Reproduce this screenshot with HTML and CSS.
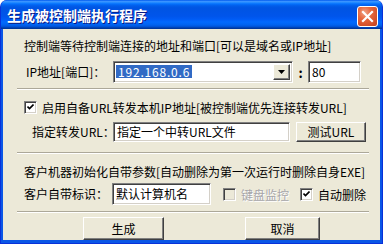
FILE: index.html
```html
<!DOCTYPE html>
<html>
<head>
<meta charset="utf-8">
<link rel="stylesheet" href="styles.css">
</head>
<body>
<div class="window">
  <div class="titlebar">
    <span class="title">生成被控制端执行程序</span>
    <span class="close"><svg width="21" height="21" viewBox="0 0 21 21"><path d="M6 6 L15 15 M15 6 L6 15" stroke="#fff" stroke-width="2.2" stroke-linecap="square"/></svg></span>
  </div>
  <div class="client">
    <div class="desc d1">控制端等待控制端连接的地址和端口[可以是域名或IP地址]</div>
    <div class="row row-ip">
      <span class="lbl lbl-ip">IP地址[端口]：</span>
      <div class="field combo"><span class="sel">192.168.0.6</span><span class="drop"><svg width="7" height="4" viewBox="0 0 7 4"><path d="M0 0 H7 L3.5 4 Z" fill="#000"/></svg></span></div>
      <span class="colon">:</span>
      <div class="field port">80</div>
    </div>
    <div class="sep s1"></div>
    <div class="row row-chk">
      <span class="chk"><svg width="7" height="7" viewBox="0 0 7 7"><path d="M0.5 2.5 L2.5 4.5 L6.5 0.5" stroke="#000" stroke-width="1.6" fill="none"/></svg></span>
      <span class="chk-lbl">启用自备URL转发本机IP地址[被控制端优先连接转发URL]</span>
    </div>
    <div class="row row-url">
      <span class="lbl lbl-url">指定转发URL：</span>
      <div class="field url">指定一个中转URL文件</div>
      <span class="btn btn-test">测试URL</span>
    </div>
    <div class="sep s2"></div>
    <div class="desc d2">客户机器初始化自带参数[自动删除为第一次运行时删除自身EXE]</div>
    <div class="row row-id">
      <span class="lbl lbl-id">客户自带标识：</span>
      <div class="field ident">默认计算机名</div>
      <span class="chk disabled"></span>
      <span class="chk-lbl dis-lbl">键盘监控</span>
      <span class="chk chk2"><svg width="7" height="7" viewBox="0 0 7 7"><path d="M0.5 2.5 L2.5 4.5 L6.5 0.5" stroke="#000" stroke-width="1.6" fill="none"/></svg></span>
      <span class="chk-lbl">自动删除</span>
    </div>
    <div class="sep s3"></div>
    <div class="row row-btns">
      <span class="btn btn-gen">生成</span>
      <span class="btn btn-cancel">取消</span>
    </div>
  </div>
</div>
</body>
</html>
```

FILE: styles.css
```css
html, body {
  margin: 0;
  padding: 0;
  background: #ffffff;
}
body {
  font-family: "Noto Sans CJK SC", "Noto Sans", sans-serif;
  font-size: 12px;
  color: #000;
}
.window {
  width: 383px;
  height: 244px;
  box-sizing: border-box;
  background: #0A56E6;
  border-radius: 7px 7px 0 0;
  display: flex;
  flex-direction: column;
  overflow: hidden;
  border: 1px solid #0831D9;
  border-top: none;
}
.titlebar {
  height: 29px;
  flex: none;
  display: flex;
  align-items: flex-start;
  justify-content: space-between;
  background: linear-gradient(to bottom, #0058EE 0%, #3A93FF 5%, #288EFF 8%, #127DFF 11%, #036FFC 14%, #0262EE 18%, #0057E5 24%, #0054E3 30%, #0055EB 56%, #005BF5 66%, #026AFE 76%, #0062EF 86%, #0052D6 92%, #0040AB 96%, #003092 100%);
  margin: 0 -1px;
  border-radius: 7px 7px 0 0;
}
.title {
  color: #fff;
  font-weight: bold;
  font-size: 14px;
  line-height: 16px;
  margin: 7px 0 0 7px;
  text-shadow: 1px 1px #0A1883;
}
.close {
  width: 21px;
  height: 21px;
  box-sizing: border-box;
  margin: 6px 5px 0 0;
  border: 1px solid #fff;
  border-radius: 3px;
  background: radial-gradient(circle at 35% 30%, #F0A58A 0%, #E7693F 35%, #D5512B 70%, #C1401D 100%);
  display: flex;
}
.close svg { margin: -1px; }
.client {
  flex: 1;
  margin: 0 2px 3px 2px;
  background: #ECE9D8;
  display: flex;
  flex-direction: column;
}
.desc {
  line-height: 12px;
  height: 12px;
  white-space: nowrap;
  padding-left: 21px;
}
.d1 { margin-top: 11px; }
.d2 { margin-top: 12px; }
.row {
  display: flex;
  align-items: center;
  white-space: nowrap;
}
.lbl { line-height: 12px; }
.field {
  box-sizing: border-box;
  background: #fff;
  border-top: 1px solid #808080;
  border-left: 1px solid #808080;
  border-right: 1px solid #fff;
  border-bottom: 1px solid #fff;
  box-shadow: inset 1px 1px #404040, inset -1px -1px #D4D0C8;
  padding: 0 0 0 3px;
  line-height: 16px;
  display: flex;
  align-items: center;
}
.row-ip { margin-top: 9px; height: 22px; padding-left: 23px; }
.lbl-ip { width: 87px; }
.combo {
  width: 180px;
  height: 22px;
  padding: 2px 2px 2px 2px;
  justify-content: space-between;
  align-items: stretch;
}
.sel {
  background: #316AC5;
  color: #fff;
  line-height: 14px;
  margin: 1px 0 2px 0;
  padding: 0 2px;
  letter-spacing: 0.8px;
}
.drop {
  width: 17px;
  box-sizing: border-box;
  background: #ECE9D8;
  border-top: 1px solid #fff;
  border-left: 1px solid #fff;
  border-right: 1px solid #404040;
  border-bottom: 1px solid #404040;
  box-shadow: inset -1px -1px #808080;
  display: flex;
  align-items: center;
  justify-content: center;
}
.colon {
  width: 15px;
  text-align: center;
  font-weight: bold;
  font-size: 13px;
}
.port { width: 53px; height: 22px; }
.sep {
  height: 0;
  border-top: 1px solid #ACA899;
  border-bottom: 1px solid #fff;
  margin-left: 14px;
  margin-right: 11px;
}
.s1 { margin-top: 5px; }
.s2 { margin-top: 10px; }
.s3 { margin-top: 6px; }
.chk {
  width: 13px;
  height: 13px;
  box-sizing: border-box;
  background: #fff;
  border-top: 1px solid #808080;
  border-left: 1px solid #808080;
  border-right: 1px solid #fff;
  border-bottom: 1px solid #fff;
  box-shadow: inset 1px 1px #404040, inset -1px -1px #D4D0C8;
  display: flex;
  align-items: center;
  justify-content: center;
  flex: none;
}
.chk.disabled { background: #ECE9D8; }
.chk-lbl { line-height: 13px; margin-left: 5px; }
.dis-lbl { color: #A7A6AA; text-shadow: 1px 1px #fff; }
.row-chk { margin-top: 11px; height: 13px; padding-left: 21px; }
.row-url { margin-top: 8px; height: 20px; padding-left: 29px; }
.lbl-url { width: 81px; }
.url { width: 177px; height: 20px; }
.btn {
  box-sizing: border-box;
  background: #ECE9D8;
  border-top: 1px solid #fff;
  border-left: 1px solid #fff;
  border-right: 1px solid #404040;
  border-bottom: 1px solid #404040;
  box-shadow: inset -1px -1px #808080;
  display: flex;
  align-items: center;
  justify-content: center;
  line-height: 12px;
}
.btn-test { width: 70px; height: 20px; margin-left: 6px; }
.row-id { margin-top: 5px; height: 22px; padding-left: 21px; }
.lbl-id { width: 88px; }
.ident { width: 99px; height: 22px; }
.disabled { margin-left: 12px; }
.chk2 { margin-left: 11px; }
.row-btns { margin-top: 4px; height: 23px; padding-left: 80px; }
.btn-gen { width: 81px; height: 23px; }
.btn-cancel { width: 75px; height: 23px; margin-left: 81px; }
```
